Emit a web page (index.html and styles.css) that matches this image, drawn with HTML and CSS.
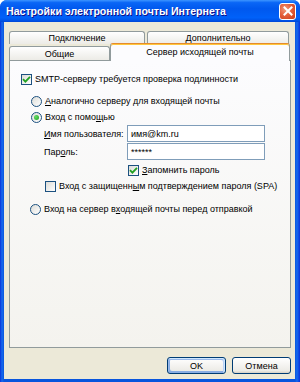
FILE: index.html
```html
<!DOCTYPE html>
<html>
    <head>
        <meta charset="utf-8">
        <title>Настройки электронной почты Интернета</title>
        <link rel="stylesheet" href="styles.css">
    </head>
    <body>
        <div class="window">
            <div class="titlebar">
                <span class="title">Настройки электронной почты Интернета</span>
                <div class="close">
                    <svg width="10" height="10" viewBox="0 0 10 10"><path d="M1.5 1.5 L8.5 8.5 M8.5 1.5 L1.5 8.5" stroke="#fff" stroke-width="2" stroke-linecap="square"/></svg>
                </div>
            </div>

            <div class="dlgBody">
                <div class="tabRow back">
                    <div class="tab tabConn">Подключение</div>
                    <div class="tab tabMore">Дополнительно</div>
                </div>
                <div class="tabRow front">
                    <div class="tab tabGeneral">Общие</div>
                    <div class="tab tabOut active">Сервер исходящей почты</div>
                </div>

                <div class="panel">
                    <div class="row rowSmtp">
                        <span class="check on"><svg width="9" height="9" viewBox="0 0 9 9"><path d="M1 4.2 L3.4 6.6 L8 1.8" fill="none" stroke="#21a121" stroke-width="1.8"/></svg></span>
                        <span class="lbl">SMTP-серверу требуется проверка подлинности</span>
                    </div>
                    <div class="row rowSame">
                        <span class="radio"></span>
                        <span class="lbl"><u>А</u>налогично серверу для входящей почты</span>
                    </div>
                    <div class="row rowWith">
                        <span class="radio on"><span class="dot"></span></span>
                        <span class="lbl">Вход с помо<u>щ</u>ью</span>
                    </div>
                    <div class="row field rowUser">
                        <span class="fieldLbl"><u>И</u>мя пользователя:</span>
                        <div class="input">имя@km.ru</div>
                    </div>
                    <div class="row field rowPass">
                        <span class="fieldLbl">Пар<u>о</u>ль:</span>
                        <div class="input pass">******</div>
                    </div>
                    <div class="row rowRemember">
                        <span class="check on"><svg width="9" height="9" viewBox="0 0 9 9"><path d="M1 4.2 L3.4 6.6 L8 1.8" fill="none" stroke="#21a121" stroke-width="1.8"/></svg></span>
                        <span class="lbl"><u>З</u>апомнить пароль</span>
                    </div>
                    <div class="row rowSpa">
                        <span class="check"></span>
                        <span class="lbl">Вход с защищенн<u>ы</u>м подтверждением пароля (SPA)</span>
                    </div>
                    <div class="row rowBefore">
                        <span class="radio"></span>
                        <span class="lbl">Вход на сервер в<u>х</u>одящей почты перед отправкой</span>
                    </div>
                </div>

                <div class="buttons">
                    <div class="btn default">OK</div>
                    <div class="btn">Отмена</div>
                </div>
            </div>
        </div>
    </body>
</html>
```

FILE: styles.css
```css
* {
    margin: 0;
    padding: 0;
    box-sizing: border-box;
}

body {
    width: 300px;
    height: 382px;
    background-color: #ffffff;
    font-family: 'Liberation Sans', Arial, sans-serif;
    font-size: 9px;
    color: #000;
    overflow: hidden;
}

.window {
    width: 300px;
    height: 382px;
    display: flex;
    flex-flow: column nowrap;
    background: linear-gradient(to right, #0831d9 0px, #166aee 2px, #0855dd 4px, #0855dd 295px, #166aee 297px, #0831d9 300px);
    border-radius: 7px 7px 0 0;
}

.titlebar {
    height: 22px;
    display: flex;
    align-items: center;
    justify-content: space-between;
    padding: 0 4px 0 6px;
    border-radius: 7px 7px 0 0;
    background: linear-gradient(#3d95ff 0%, #0a66f6 12%, #0058ee 40%, #0061f9 80%, #0055e9 92%, #0047d6 100%);
}
.title {
    color: white;
    font-weight: bold;
    font-size: 10.6px;
    text-shadow: 1px 1px #0f1089;
}
.close {
    width: 17px;
    height: 17px;
    border: 1px solid white;
    border-radius: 3px;
    background: radial-gradient(circle at 35% 35%, #f19b7c 0%, #e4603d 45%, #c93a16 100%);
    display: flex;
    align-items: center;
    justify-content: center;
}

.dlgBody {
    flex: 1;
    margin: 0 5px 3px 4px;
    padding: 9px 4px 0 5px;
    background-color: #ece9d8;
    display: flex;
    flex-flow: column nowrap;
}

.tabRow {
    display: flex;
    flex-flow: row nowrap;
}
.back {
    height: 13px;
    gap: 2px;
}
.front {
    height: 16px;
}
.tab {
    display: flex;
    align-items: center;
    justify-content: center;
    border: 1px solid #919b9c;
    border-radius: 3px 3px 0 0;
    background: linear-gradient(#ffffff, #ecebe6);
}
.back .tab {
    border-bottom: none;
    height: 13px;
}
.tabConn { width: 136px; }
.tabMore { width: 142px; }
.tabGeneral {
    width: 101px;
    height: 14px;
    margin-top: 2px;
    border-bottom: none;
}
.tabOut {
    width: 180px;
    height: 18px;
    margin-top: -1px;
    padding-bottom: 2px;
    border-bottom: none;
    border-top: 1px solid #e68b2c;
    box-shadow: inset 0 1px #ffc73c;
    background: #fcfcfe;
    position: relative;
    z-index: 1;
}

.panel {
    height: 288px;
    border: 1px solid #919b9c;
    background: linear-gradient(#fcfcfe, #f4f3ee);
    padding-top: 10px;
    display: flex;
    flex-flow: column nowrap;
}

.row {
    height: 16px;
    display: flex;
    align-items: center;
}
.rowSmtp { padding-left: 11px; }
.rowSame { padding-left: 21px; margin-top: 6px; }
.rowWith { padding-left: 21px; }
.field {
    height: 17px;
    padding-left: 34px;
}
.rowPass { margin-top: 1px; }
.rowRemember { padding-left: 118px; margin-top: 2px; }
.rowSpa { padding-left: 35px; }
.rowBefore { padding-left: 20px; margin-top: 7px; }

.lbl {
    margin-left: 3px;
    white-space: nowrap;
}
.fieldLbl {
    width: 83px;
    white-space: nowrap;
}

.check {
    width: 11px;
    height: 11px;
    flex: none;
    border: 1px solid #1c5180;
    background: linear-gradient(135deg, #dcdcd7, #ffffff);
    display: flex;
    align-items: center;
    justify-content: center;
}
.radio {
    width: 11px;
    height: 11px;
    flex: none;
    border: 1px solid #1c5180;
    border-radius: 50%;
    background: linear-gradient(135deg, #dcdcd7, #ffffff);
    display: flex;
    align-items: center;
    justify-content: center;
}
.dot {
    width: 5px;
    height: 5px;
    border-radius: 50%;
    background: radial-gradient(circle at 35% 35%, #64dc64, #21a121);
}

.input {
    width: 138px;
    height: 17px;
    border: 1px solid #7f9db9;
    background: white;
    padding-left: 3px;
    display: flex;
    align-items: center;
}

.buttons {
    margin-top: 9px;
    display: flex;
    justify-content: flex-end;
    gap: 6px;
}
.btn {
    width: 59px;
    height: 17px;
    border: 1px solid #003c74;
    border-radius: 3px;
    background: linear-gradient(#ffffff, #ecebe6 85%, #d6d0c5);
    display: flex;
    align-items: center;
    justify-content: center;
}
.default {
    box-shadow: inset -1px 1px #cee7ff, inset 1px 2px #98b8ea, inset -2px 2px #bcd4f6, inset 1px -1px #89ade4, inset 2px -2px #89ade4;
}
```
